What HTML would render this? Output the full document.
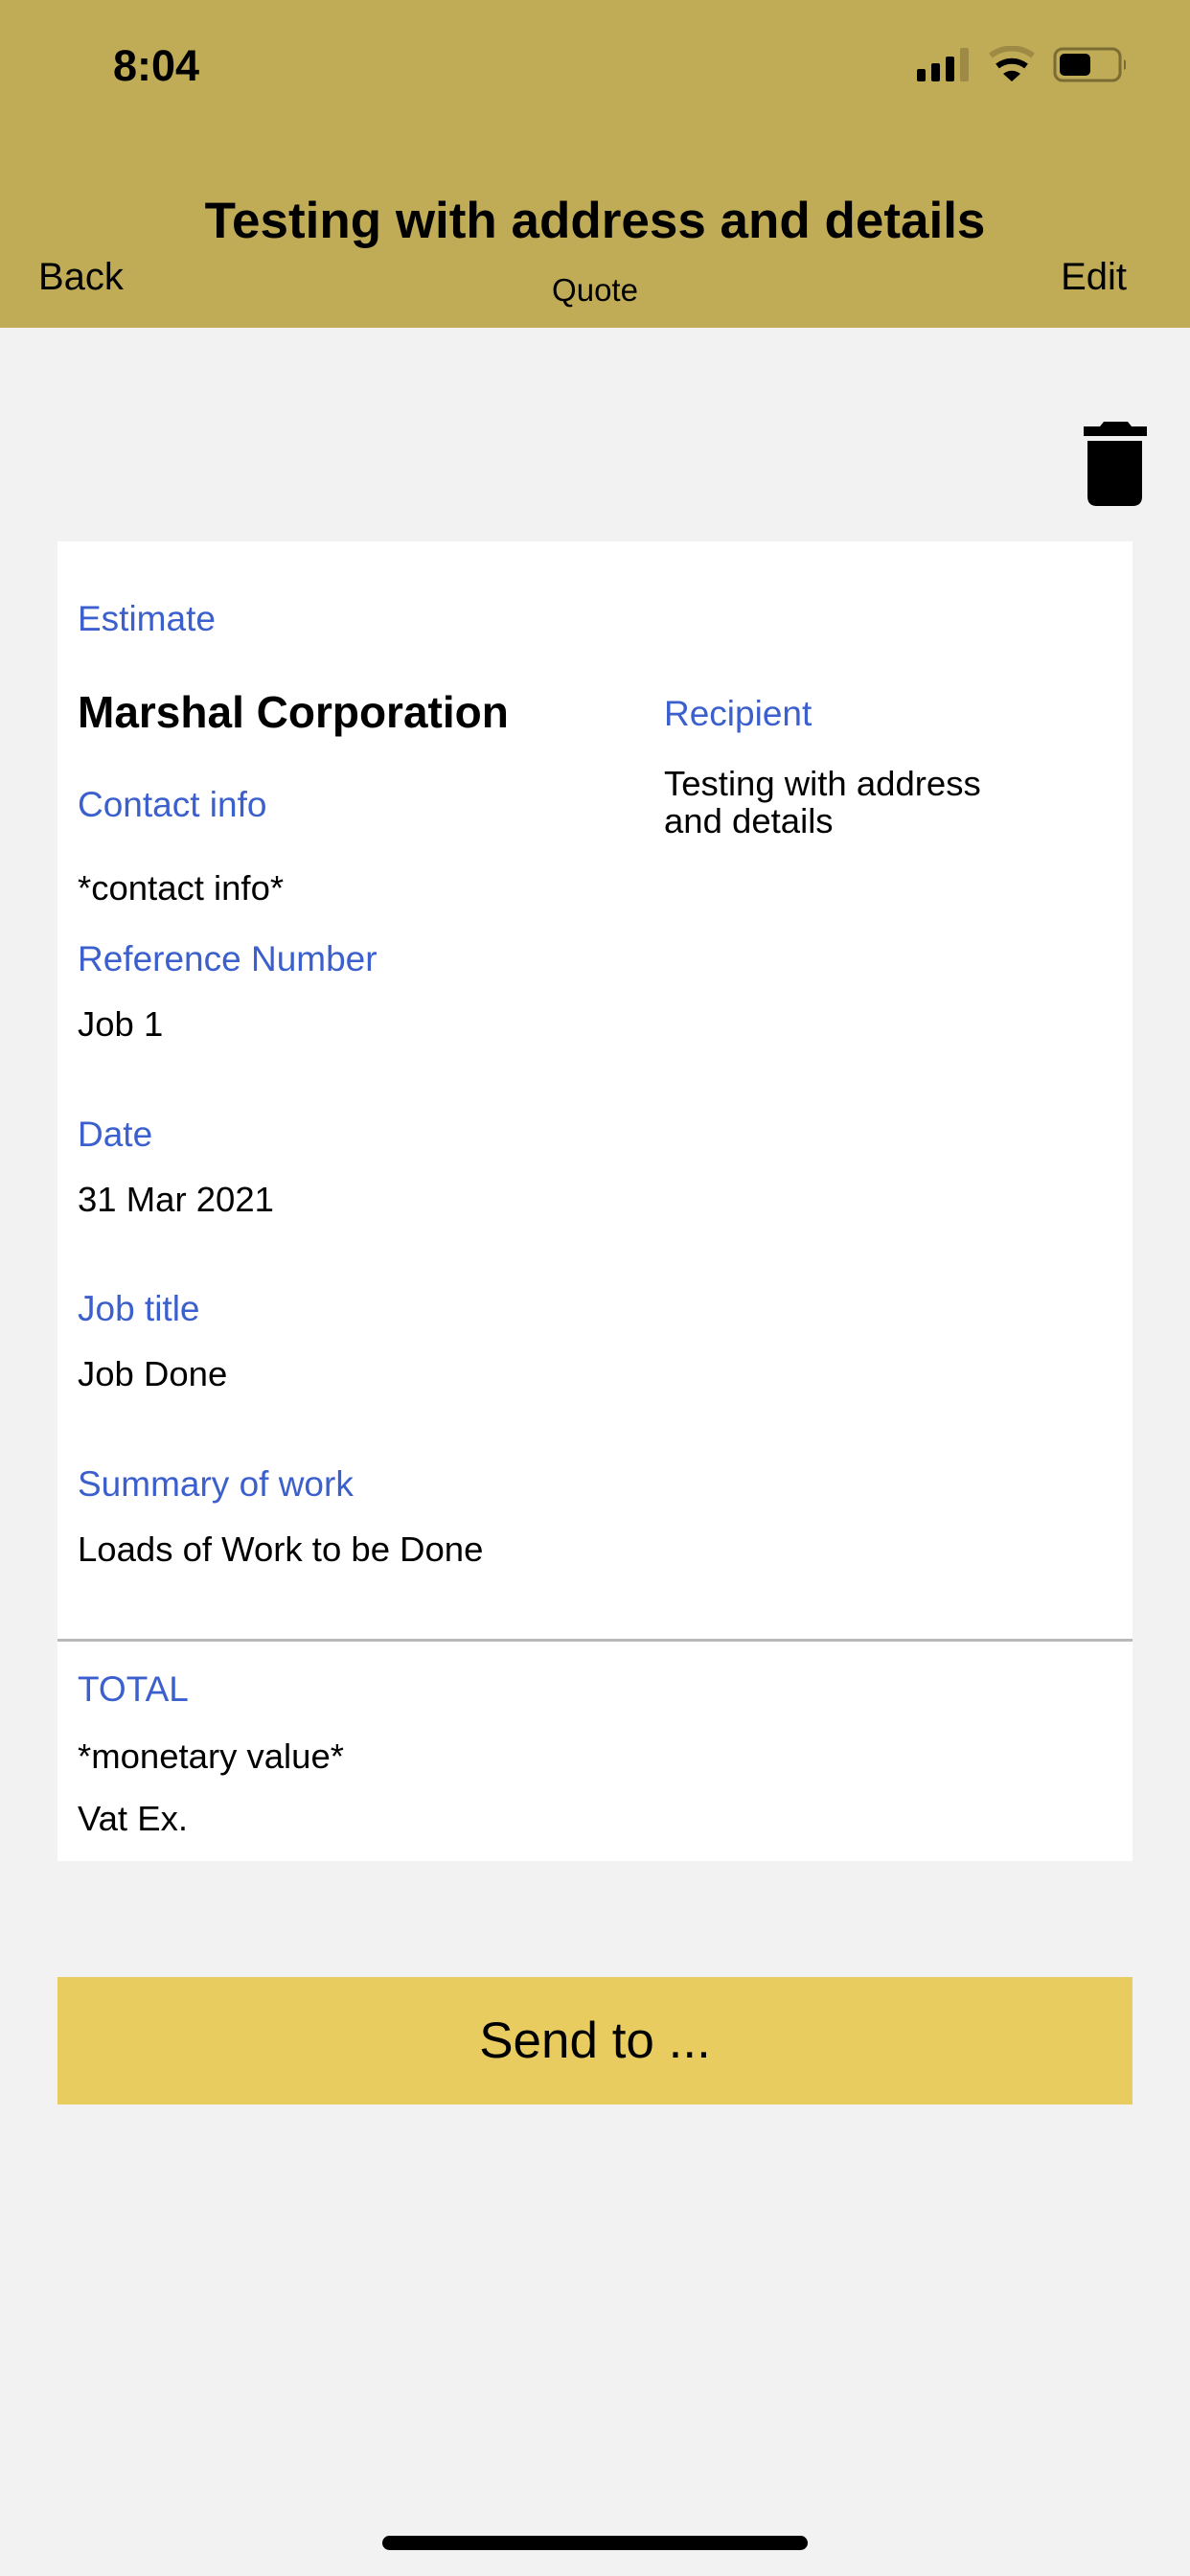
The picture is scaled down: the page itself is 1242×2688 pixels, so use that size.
<!DOCTYPE html>
<html><head><meta charset="utf-8"><style>
*{margin:0;padding:0;box-sizing:border-box}
body{width:1242px;height:2688px;background:#f2f2f2;position:relative;overflow:hidden;font-family:"Liberation Sans",sans-serif;color:#000}
.a{position:absolute;white-space:nowrap}
.hdr{position:absolute;left:0;top:0;width:1242px;height:342px;background:#c0ab57}
.card{position:absolute;left:60px;top:565px;width:1122px;height:1377px;background:#fff}
.div{position:absolute;left:60px;top:1710px;width:1122px;height:3px;background:#b9b9b9}
.l{color:#3b5fcc;font-size:37px;line-height:44px;left:81px}
.v{font-size:36.5px;line-height:44px;left:81px}
.btn{position:absolute;left:60px;top:2063px;width:1122px;height:133px;background:#e8cc60;text-align:center;font-size:53px;line-height:133px}
</style></head><body>
<div class="hdr"></div>
<div class="a" style="left:118px;top:44px;font-size:45px;line-height:50px;font-weight:bold">8:04</div>
<svg class="a" style="left:955px;top:48px" width="220" height="40" viewBox="955 48 220 40">
<rect x="957" y="72" width="9" height="13" rx="2"/>
<rect x="972" y="66" width="9" height="19" rx="2"/>
<rect x="987" y="59" width="9" height="26" rx="2"/>
<rect x="1002" y="50" width="9" height="35" rx="2" fill="#9d8a45"/>
<path d="M1034 58 A36 36 0 0 1 1078 58" stroke="#9d8a45" stroke-width="6" fill="none"/>
<path d="M1041 69 A24 24 0 0 1 1071 69" stroke="#000" stroke-width="6" fill="none"/>
<path d="M1047 77 L1056 85 L1065 77 A14 14 0 0 0 1047 77Z"/>
<rect x="1101" y="51" width="68" height="33" rx="8" fill="none" stroke="#7a6c33" stroke-width="3"/>
<rect x="1106" y="56" width="32" height="23" rx="5"/>
<path d="M1173 62 a5 6 0 0 1 0 11z" fill="#7a6c33"/>
</svg>
<div class="a" style="left:0;width:1242px;text-align:center;top:201px;font-size:53px;line-height:60px;font-weight:bold">Testing with address and details</div>
<div class="a" style="left:40px;top:266px;font-size:40px;line-height:46px">Back</div>
<div class="a" style="right:66px;top:266px;font-size:40px;line-height:46px">Edit</div>
<div class="a" style="left:0;width:1242px;text-align:center;top:284px;font-size:33px;line-height:38px">Quote</div>
<svg class="a" style="left:1128px;top:438px" width="72" height="94" viewBox="1128 438 72 94">
<path d="M1148 445 L1152 440 L1177 440 L1181 445 L1197 445 L1197 455 L1131 455 L1131 445Z"/>
<path d="M1135 460 L1192 460 L1192 518 Q1192 528 1182 528 L1145 528 Q1135 528 1135 518Z"/>
</svg>
<div class="card"></div>
<div class="div"></div>
<div class="a l" style="top:624px">Estimate</div>
<div class="a" style="left:81px;top:717px;font-size:46px;line-height:52px;font-weight:bold">Marshal Corporation</div>
<div class="a l" style="left:693px;top:723px">Recipient</div>
<div class="a v" style="left:693px;top:798px;line-height:39px">Testing with address<br>and details</div>
<div class="a l" style="top:818px">Contact info</div>
<div class="a v" style="top:905px">*contact info*</div>
<div class="a l" style="top:979px">Reference Number</div>
<div class="a v" style="top:1047px">Job 1</div>
<div class="a l" style="top:1162px">Date</div>
<div class="a v" style="top:1230px">31 Mar 2021</div>
<div class="a l" style="top:1344px">Job title</div>
<div class="a v" style="top:1412px">Job Done</div>
<div class="a l" style="top:1527px">Summary of work</div>
<div class="a v" style="top:1595px">Loads of Work to be Done</div>
<div class="a l" style="top:1741px">TOTAL</div>
<div class="a v" style="top:1811px">*monetary value*</div>
<div class="a v" style="top:1876px">Vat Ex.</div>
<div class="btn">Send to ...</div>
<div class="a" style="left:399px;top:2646px;width:444px;height:15px;border-radius:8px;background:#000"></div>
</body></html>
